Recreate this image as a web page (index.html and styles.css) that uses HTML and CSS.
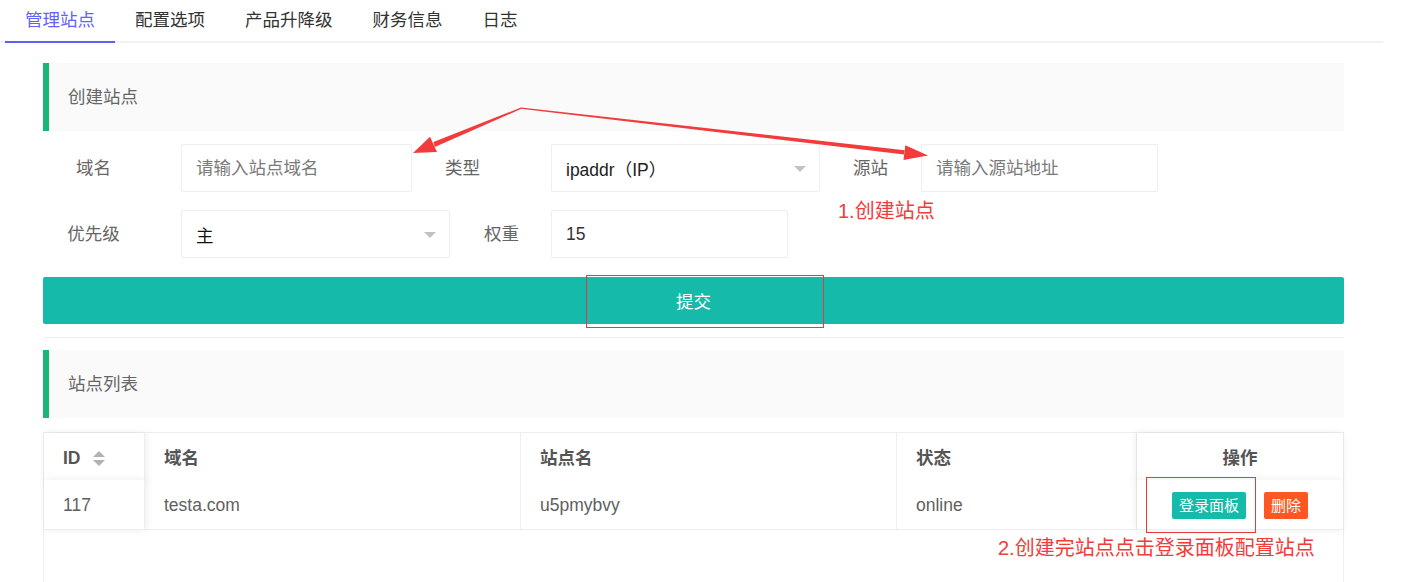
FILE: index.html
```html
<!DOCTYPE html>
<html lang="zh-CN">
<head>
<meta charset="utf-8">
<title>管理站点</title>
<link rel="stylesheet" href="styles.css">
</head>
<body>
<div class="page">
  <ul class="tabs">
    <li class="tab active">管理站点</li>
    <li class="tab">配置选项</li>
    <li class="tab">产品升降级</li>
    <li class="tab">财务信息</li>
    <li class="tab">日志</li>
  </ul>

  <div class="content">
    <div class="sec-head">创建站点</div>

    <div class="form">
      <div class="frow">
        <label class="lbl first">域名</label>
        <input class="inp w231" type="text" placeholder="请输入站点域名">
        <label class="lbl w139">类型</label>
        <div class="sel w269"><span>ipaddr（IP）</span><i class="caret"></i></div>
        <label class="lbl w101">源站</label>
        <input class="inp w237" type="text" placeholder="请输入源站地址">
      </div>
      <div class="frow">
        <label class="lbl first">优先级</label>
        <div class="sel w269 dark"><span>主</span><i class="caret"></i></div>
        <label class="lbl w101 p34">权重</label>
        <input class="inp w237" type="text" value="15">
      </div>
      <button class="submit" type="button">提交</button>
    </div>

    <div class="divider"></div>

    <div class="sec-head">站点列表</div>

    <div class="table">
      <div class="tr head">
        <div class="td c-id fixed-l">ID<span class="sort"><i class="up"></i><i class="down"></i></span></div>
        <div class="td c-domain">域名</div>
        <div class="td c-name">站点名</div>
        <div class="td c-state">状态</div>
        <div class="td c-op fixed-r center">操作</div>
      </div>
      <div class="tr">
        <div class="td c-id fixed-l">117</div>
        <div class="td c-domain">testa.com</div>
        <div class="td c-name">u5pmybvy</div>
        <div class="td c-state">online</div>
        <div class="td c-op fixed-r center">
          <span class="btn-xs teal">登录面板</span><span class="btn-xs orange">删除</span>
        </div>
      </div>
    </div>
  </div>

  <div class="annot">
    <svg class="arrows" width="1402" height="582" viewBox="0 0 1402 582">
      <polygon fill="#f23b3b" points="521,107.5 433.5,142 434.8,147 521.5,108.8"/>
      <polygon fill="#f23b3b" points="413,153 430,136.8 437,152"/>
      <polygon fill="#f23b3b" points="521,107.5 904.6,150.2 904.1,154.6 520.8,108.8"/>
      <polygon fill="#f23b3b" points="928,155.5 905.3,145.2 903.5,160"/>
    </svg>
    <div class="box box1"></div>
    <div class="box box2"></div>
    <div class="note note1">1.创建站点</div>
    <div class="note note2">2.创建完站点点击登录面板配置站点</div>
  </div>
</div>
</body>
</html>
```

FILE: styles.css
```css
* { box-sizing: border-box; }

html, body {
  margin: 0;
  padding: 0;
  background: #fff;
}

body {
  font-family: "Liberation Sans", "Noto Sans CJK SC", sans-serif;
  font-size: 17.5px;
  color: #333;
}

.page {
  position: relative;
  width: 1402px;
  height: 582px;
  overflow: hidden;
}

/* Tabs */
.tabs {
  list-style: none;
  margin: 0;
  padding: 0 0 0 5px;
  width: 1383px;
  height: 43px;
  display: flex;
  border-bottom: 2px solid #f2f2f2;
}

.tab {
  position: relative;
  padding: 0 20px;
  line-height: 41px;
  height: 41px;
  color: #333;
  white-space: nowrap;
}

.tab.active {
  color: #6262ff;
}

.tab.active::after {
  content: "";
  position: absolute;
  left: 0;
  right: 0;
  bottom: -2px;
  height: 2px;
  background: #5f5ff6;
}

/* Content */
.content {
  padding: 20px 0 0 43px;
  width: 1344px;
}

.sec-head {
  height: 68px;
  line-height: 68px;
  background: #fafafa;
  border-left: 6px solid #16b777;
  padding-left: 19px;
  color: #666;
}

.form {
  padding-top: 13px;
}

.frow {
  display: flex;
  height: 48px;
  margin-bottom: 18px;
}

.lbl {
  line-height: 48px;
  color: #666;
  white-space: nowrap;
}

.lbl.first {
  width: 138px;
  padding-right: 37px;
  text-align: center;
}

.w139 { width: 139px; padding-left: 33px; }
.w101 { width: 101px; padding-left: 33px; }
.w101.p34 { padding-left: 34px; }

.inp, .sel {
  height: 48px;
  border: 1px solid #eee;
  border-radius: 2px;
  background: #fff;
  font: inherit;
  color: #333;
  padding: 0 14px;
  outline: none;
}

.inp::placeholder {
  color: #7a7a7a;
}

.w231 { width: 231px; }
.w237 { width: 237px; }
.w269 { width: 269px; }

.sel {
  display: flex;
  align-items: center;
  justify-content: space-between;
  padding-right: 13px;
  color: #222;
}

.sel.dark { color: #111; }

.caret {
  width: 0;
  height: 0;
  border-left: 6px solid transparent;
  border-right: 6px solid transparent;
  border-top: 6px solid #c2c2c2;
  margin-top: 2px;
}

.submit {
  display: block;
  width: 1301px;
  height: 47px;
  margin-top: 19px;
  border: 0;
  border-radius: 2px;
  background: #16baaa;
  color: #fff;
  font: inherit;
  padding: 0;
}

.divider {
  width: 1301px;
  height: 1px;
  background: #eee;
  margin: 13px 0 12px;
}

/* Table */
.table {
  margin-top: 14px;
  width: 1301px;
  height: 160px;
  border: 1px solid #eee;
  border-bottom: 0;
}

.tr {
  display: grid;
  grid-template-columns: 101px 376px 376px 240px 206px;
  height: 48px;
}

.head.tr {
  height: 47px;
}

.td {
  border-bottom: 1px solid #eee;
  border-right: 1px solid #eee;
  padding-left: 19px;
  line-height: 47px;
  color: #5f5f5f;
  white-space: nowrap;
  background: #fff;
  display: flex;
  align-items: center;
  padding-top: 2px;
}

.td.c-op { border-right: 0; }

.head .td {
  font-weight: bold;
  color: #555;
}

.td.center {
  justify-content: center;
  padding-left: 0;
}

.fixed-l {
  position: relative;
  z-index: 2;
  box-shadow: 1px 0 8px rgba(0, 0, 0, 0.08);
}

.fixed-r {
  position: relative;
  z-index: 2;
  box-shadow: -1px 0 8px rgba(0, 0, 0, 0.08);
}

.sort {
  display: inline-flex;
  flex-direction: column;
  gap: 3px;
  margin-left: 12px;
}

.sort i {
  display: block;
  width: 0;
  height: 0;
  border-left: 6px solid transparent;
  border-right: 6px solid transparent;
}

.sort .up { border-bottom: 6px solid #b2b2b2; }
.sort .down { border-top: 6px solid #b2b2b2; }

.btn-xs {
  display: inline-block;
  height: 27px;
  line-height: 27px;
  padding: 0 7px;
  font-size: 15px;
  color: #fff;
  border-radius: 2px;
}

.btn-xs + .btn-xs { margin-left: 18px; }

.teal { background: #16baaa; }
.orange { background: #ff5722; }

/* Annotations */
.annot {
  position: absolute;
  inset: 0;
  z-index: 10;
  pointer-events: none;
}

.arrows {
  position: absolute;
  left: 0;
  top: 0;
}

.box {
  position: absolute;
  border: 1px solid #e83a3a;
}

.box1 { left: 586px; top: 275px; width: 238px; height: 53px; }
.box2 { left: 1146px; top: 477px; width: 110px; height: 56px; }

.note {
  position: absolute;
  font-size: 20px;
  line-height: 24px;
  color: #f23b3b;
  white-space: nowrap;
}

.note1 { left: 838px; top: 199px; }
.note2 { left: 998px; top: 536px; }
```
